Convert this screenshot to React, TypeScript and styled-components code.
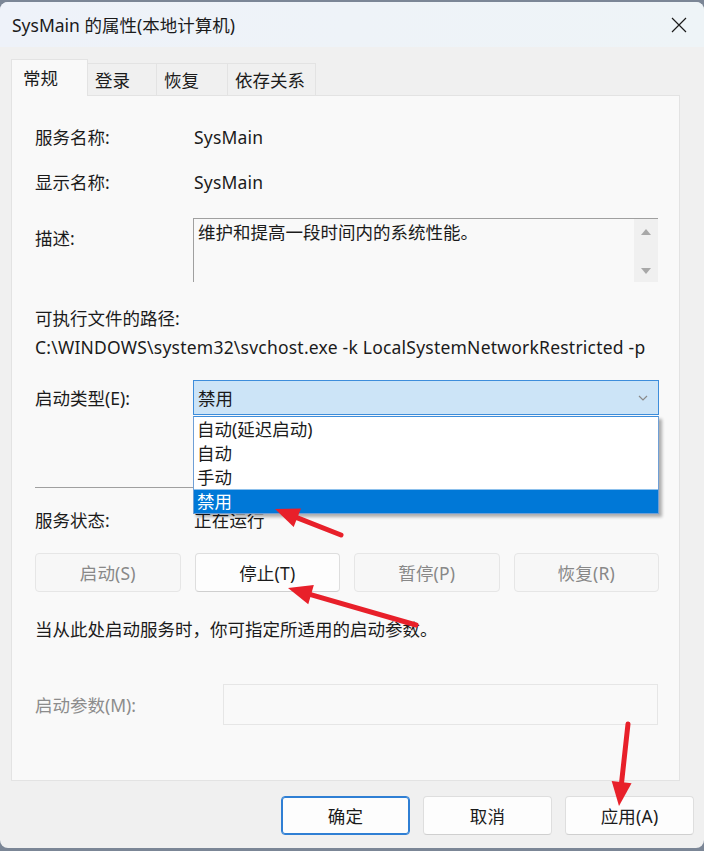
import React from "react";
import styled, { createGlobalStyle } from "styled-components";

const Global = createGlobalStyle`
  html, body { margin: 0; padding: 0; background: #7b8696; }
  body { font-family: "Noto Sans", "Noto Sans CJK SC", sans-serif; }
  * { box-sizing: border-box; }
`;

const Window = styled.div`
  position: relative;
  width: 704px;
  height: 846px;
  margin-top: 2px;
  background: #f0f0f0;
  border-radius: 8px;
  overflow: hidden;
  font-family: "Noto Sans", "Noto Sans CJK SC", sans-serif;
  font-size: 17.5px;
  color: #1b1b1b;
  display: flex;
  flex-direction: column;
`;

const TitleBar = styled.div`
  height: 45px;
  flex: none;
  display: flex;
  align-items: center;
  justify-content: space-between;
  padding: 0 16px 0 12px;
  background: linear-gradient(90deg, #eef2f9 0%, #eef4f7 100%);
  font-size: 17.5px;
  line-height: 22px;
`;

const CloseBtn = styled.div`
  width: 18px;
  height: 18px;
  display: flex;
  align-items: center;
  justify-content: center;
`;

const Body = styled.div`
  flex: 1;
  display: flex;
  flex-direction: column;
  padding: 13px 24px 0 11px;
`;

const TabStrip = styled.div`
  display: flex;
  align-items: flex-end;
  height: 36px;
  position: relative;
  z-index: 1;
  margin-bottom: -1px;
`;

const Tab = styled.div<{ $active?: boolean; $w: number }>`
  width: ${(p) => p.$w}px;
  height: ${(p) => (p.$active ? 37 : 33)}px;
  padding-left: ${(p) => (p.$active ? 11 : 7)}px;
  display: flex;
  align-items: center;
  background: ${(p) => (p.$active ? "#f9f9f9" : "#f0f0f0")};
  border: 1px solid #e3e3e3;
  border-bottom: ${(p) => (p.$active ? "none" : "1px solid #e3e3e3")};
  margin-left: ${(p) => (p.$active ? 0 : -1)}px;
  font-size: 17.5px;
  line-height: 22px;
  color: #1b1b1b;
`;

const Panel = styled.div`
  height: 686px;
  background: #f9f9f9;
  border: 1px solid #e3e3e3;
  padding: 30px 20px 0 23px;
  display: flex;
  flex-direction: column;
`;

const FieldRow = styled.div<{ $mt?: number }>`
  display: grid;
  grid-template-columns: 158px 1fr;
  align-items: start;
  margin-top: ${(p) => p.$mt ?? 0}px;
  line-height: 22px;
`;

const Label = styled.div<{ $pt?: number; $disabled?: boolean }>`
  padding-top: ${(p) => p.$pt ?? 0}px;
  color: ${(p) => (p.$disabled ? "#8c8c8c" : "#1b1b1b")};
  white-space: nowrap;
`;

const Value = styled.div`
  padding-left: 1px;
  white-space: nowrap;
  letter-spacing: 0.2px;
`;

const DescBox = styled.div`
  height: 64px;
  display: flex;
  border-top: 1px solid #a0a0a0;
  border-left: 1px solid #a0a0a0;
  background: #f9f9f9;
  margin-right: 1px;
`;

const DescText = styled.div`
  flex: 1;
  padding: 2px 4px;
  line-height: 22px;
`;

const ScrollBar = styled.div`
  width: 24px;
  background: #f0f0f0;
  display: flex;
  flex-direction: column;
  align-items: center;
  justify-content: space-between;
  padding: 10px 0 8px;
`;

const Tri = styled.div<{ $down?: boolean }>`
  width: 0;
  height: 0;
  border-left: 5px solid transparent;
  border-right: 5px solid transparent;
  ${(p) =>
    p.$down
      ? "border-top: 6px solid #a8a8a8;"
      : "border-bottom: 6px solid #a8a8a8;"}
`;

const TextLine = styled.div<{ $mt?: number }>`
  margin-top: ${(p) => p.$mt ?? 0}px;
  line-height: 22px;
  white-space: nowrap;
`;

const PathLine = styled(TextLine)`
  letter-spacing: 0.22px;
`;

const ComboWrap = styled.div`
  position: relative;
  height: 35px;
`;

const Combo = styled.div`
  height: 35px;
  background: #cce4f7;
  border: 1px solid #3d8ddb;
  display: flex;
  align-items: center;
  justify-content: space-between;
  padding: 0 10px 0 4px;
`;

const DropList = styled.div`
  position: absolute;
  top: 36px;
  left: 0;
  right: 0;
  background: #ffffff;
  border: 1px solid #6f9fd6;
  border-top-color: #3d8ddb;
  box-shadow: 3px 3px 3px rgba(0, 0, 0, 0.3);
  z-index: 5;
`;

const DropItem = styled.div<{ $sel?: boolean }>`
  height: 24px;
  padding-left: 3px;
  background: ${(p) => (p.$sel ? "#0078d7" : "transparent")};
  color: ${(p) => (p.$sel ? "#ffffff" : "#1b1b1b")};
  border-top: 1px solid ${(p) => (p.$sel ? "#8cc0ec" : "transparent")};
  line-height: 22px;
`;

const Separator = styled.div`
  margin-top: 72px;
  height: 1px;
  background: #a0a0a0;
`;

const ButtonGrid = styled.div`
  margin-top: 22px;
  display: grid;
  grid-template-columns: repeat(4, 1fr);
  column-gap: 14px;
`;

const Btn = styled.div<{ $disabled?: boolean; $default?: boolean }>`
  height: 39px;
  display: flex;
  align-items: center;
  justify-content: center;
  border-radius: 4px;
  font-size: 17.5px;
  letter-spacing: 0.2px;
  background: ${(p) => (p.$disabled ? "#f7f7f7" : "#fdfdfd")};
  color: ${(p) => (p.$disabled ? "#888888" : "#1b1b1b")};
  border: 1px solid ${(p) => (p.$disabled ? "#e6e6e6" : p.$default ? "#2f7fd4" : "#dedede")};
  border-bottom-color: ${(p) => (p.$disabled ? "#e6e6e6" : p.$default ? "#2f7fd4" : "#cfcfcf")};
  ${(p) => (p.$default ? "box-shadow: inset 0 0 0 1px #2f7fd4;" : "")}
`;

const ParamRow = styled.div`
  margin-top: 44px;
  display: grid;
  grid-template-columns: 188px 1fr;
  align-items: center;
`;

const ParamInput = styled.div`
  height: 41px;
  background: #f9f9f9;
  border: 1px solid #e6e6e6;
  margin-right: 1px;
`;

const Footer = styled.div`
  display: flex;
  justify-content: flex-end;
  gap: 13px;
  padding: 15px 10px 0 0;
  margin-right: -24px;
`;

const FooterBtn = styled(Btn)`
  width: 129px;
`;

const ArrowLayer = styled.svg`
  position: absolute;
  left: 0;
  top: 0;
  pointer-events: none;
  z-index: 10;
`;

type Arrow = { x1: number; y1: number; x2: number; y2: number };

const arrows: Arrow[] = [
  { x1: 341, y1: 535, x2: 275, y2: 509 },
  { x1: 416, y1: 625, x2: 288, y2: 588 },
  { x1: 628, y1: 724, x2: 619, y2: 806 },
];

function headPoints(a: Arrow, len = 24, half = 10) {
  const dx = a.x2 - a.x1;
  const dy = a.y2 - a.y1;
  const d = Math.hypot(dx, dy);
  const ux = dx / d;
  const uy = dy / d;
  const bx = a.x2 - ux * len;
  const by = a.y2 - uy * len;
  const px = -uy;
  const py = ux;
  return {
    pts: `${a.x2},${a.y2} ${bx + px * half},${by + py * half} ${bx - px * half},${by - py * half}`,
    bx: a.x2 - ux * (len - 4),
    by: a.y2 - uy * (len - 4),
  };
}

export default function App() {
  return (
    <>
      <Global />
      <Window>
        <TitleBar>
          <span>SysMain 的属性(本地计算机)</span>
          <CloseBtn>
            <svg width="16" height="16" viewBox="0 0 16 16">
              <path d="M1 1 L15 15 M15 1 L1 15" stroke="#1b1b1b" strokeWidth="1.2" fill="none" />
            </svg>
          </CloseBtn>
        </TitleBar>
        <Body>
          <TabStrip>
            <Tab $active $w={77}>常规</Tab>
            <Tab $w={70}>登录</Tab>
            <Tab $w={72}>恢复</Tab>
            <Tab $w={89}>依存关系</Tab>
          </TabStrip>
          <Panel>
            <FieldRow>
              <Label>服务名称:</Label>
              <Value>SysMain</Value>
            </FieldRow>
            <FieldRow $mt={23}>
              <Label>显示名称:</Label>
              <Value>SysMain</Value>
            </FieldRow>
            <FieldRow $mt={25}>
              <Label $pt={9}>描述:</Label>
              <DescBox>
                <DescText>维护和提高一段时间内的系统性能。</DescText>
                <ScrollBar>
                  <Tri />
                  <Tri $down />
                </ScrollBar>
              </DescBox>
            </FieldRow>
            <TextLine $mt={25}>可执行文件的路径:</TextLine>
            <PathLine $mt={7}>C:\WINDOWS\system32\svchost.exe -k LocalSystemNetworkRestricted -p</PathLine>
            <FieldRow $mt={22}>
              <Label $pt={7}>启动类型(E):</Label>
              <ComboWrap>
                <Combo>
                  <span>禁用</span>
                  <svg width="10" height="6" viewBox="0 0 10 6">
                    <path d="M1 1 L5 5 L9 1" stroke="#8a8a8a" strokeWidth="1.2" fill="none" />
                  </svg>
                </Combo>
                <DropList>
                  <DropItem>自动(延迟启动)</DropItem>
                  <DropItem>自动</DropItem>
                  <DropItem>手动</DropItem>
                  <DropItem $sel>禁用</DropItem>
                </DropList>
              </ComboWrap>
            </FieldRow>
            <Separator />
            <FieldRow $mt={21}>
              <Label>服务状态:</Label>
              <Value>正在运行</Value>
            </FieldRow>
            <ButtonGrid>
              <Btn $disabled>启动(S)</Btn>
              <Btn>停止(T)</Btn>
              <Btn $disabled>暂停(P)</Btn>
              <Btn $disabled>恢复(R)</Btn>
            </ButtonGrid>
            <TextLine $mt={26}>当从此处启动服务时，你可指定所适用的启动参数。</TextLine>
            <ParamRow>
              <Label $disabled>启动参数(M):</Label>
              <ParamInput />
            </ParamRow>
          </Panel>
          <Footer>
            <FooterBtn $default>确定</FooterBtn>
            <FooterBtn>取消</FooterBtn>
            <FooterBtn>应用(A)</FooterBtn>
          </Footer>
        </Body>
        <ArrowLayer width="704" height="846" viewBox="0 2 704 846">
          {arrows.map((a, i) => {
            const h = headPoints(a);
            return (
              <g key={i}>
                <line x1={a.x1} y1={a.y1} x2={h.bx} y2={h.by} stroke="#e8202a" strokeWidth="5" strokeLinecap="round" />
                <polygon points={h.pts} fill="#e8202a" />
              </g>
            );
          })}
        </ArrowLayer>
      </Window>
    </>
  );
}
